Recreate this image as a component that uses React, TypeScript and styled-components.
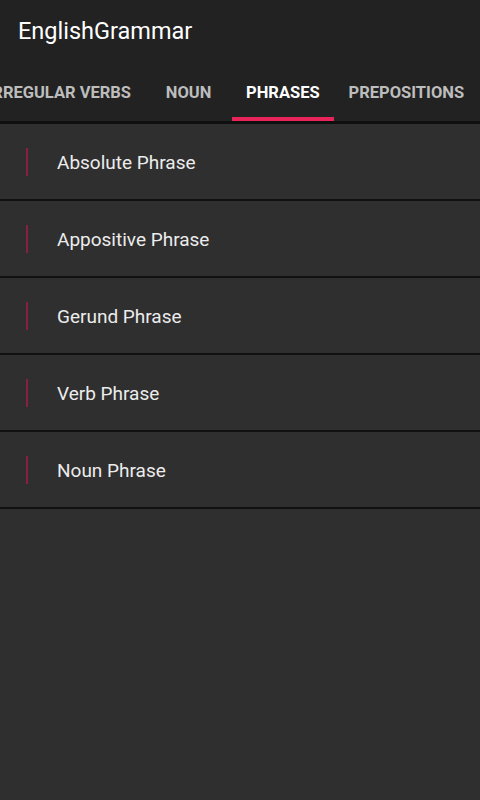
import React from 'react';
import styled, { createGlobalStyle } from 'styled-components';

const GlobalStyle = createGlobalStyle`
  html, body {
    margin: 0;
    padding: 0;
    background-color: #2f2f2f;
    font-family: Roboto, "Noto Sans", "Liberation Sans", sans-serif;
  }
`;

const Page = styled.div`
  width: 480px;
  min-height: 800px;
  background-color: #2f2f2f;
  overflow: hidden;
`;

const AppBar = styled.div`
  background-color: #222222;
  border-bottom: 3px solid #0f0f0f;
`;

const TitleRow = styled.div`
  height: 62px;
  display: flex;
  align-items: center;
  padding-left: 18px;
  color: #ffffff;
  font-size: 23.5px;
  padding-bottom: 1px;
  box-sizing: border-box;
`;

const TabStrip = styled.div`
  height: 59px;
  overflow: hidden;
`;

// the strip is scrolled a little, so the first tab is cut at the left edge
const TabTrack = styled.div`
  display: flex;
  height: 100%;
  margin-left: -27px;
`;

const Tab = styled.div<{ active?: boolean }>`
  flex-shrink: 0;
  min-width: 86px;
  padding: 5px 14.5px 0;
  box-sizing: border-box;
  display: flex;
  align-items: center;
  justify-content: center;
  font-size: 16.5px;
  font-weight: 700;
  color: ${({ active }) => (active ? '#ffffff' : '#bdbdbd')};
  border-bottom: 4px solid ${({ active }) => (active ? '#e8245a' : 'transparent')};
  white-space: nowrap;
`;

const List = styled.div`
  display: flex;
  flex-direction: column;
`;

const Row = styled.div`
  height: 75px;
  display: flex;
  align-items: center;
  border-bottom: 2px solid #111111;
  background-color: #2f2f2f;
`;

const Marker = styled.div`
  width: 2px;
  height: 28px;
  margin-left: 26px;
  margin-right: 29px;
  background-color: #8a1f42;
`;

const Label = styled.span`
  color: #ececec;
  font-size: 19px;
  padding-top: 1px;
`;

const tabs = ['IRREGULAR VERBS', 'NOUN', 'PHRASES', 'PREPOSITIONS'];
const phrases = ['Absolute Phrase', 'Appositive Phrase', 'Gerund Phrase', 'Verb Phrase', 'Noun Phrase'];

export default function App() {
  return (
    <Page>
      <GlobalStyle />
      <AppBar>
        <TitleRow>EnglishGrammar</TitleRow>
        <TabStrip>
          <TabTrack>
            {tabs.map((t) => (
              <Tab key={t} active={t === 'PHRASES'}>
                {t}
              </Tab>
            ))}
          </TabTrack>
        </TabStrip>
      </AppBar>
      <List>
        {phrases.map((p) => (
          <Row key={p}>
            <Marker />
            <Label>{p}</Label>
          </Row>
        ))}
      </List>
    </Page>
  );
}
